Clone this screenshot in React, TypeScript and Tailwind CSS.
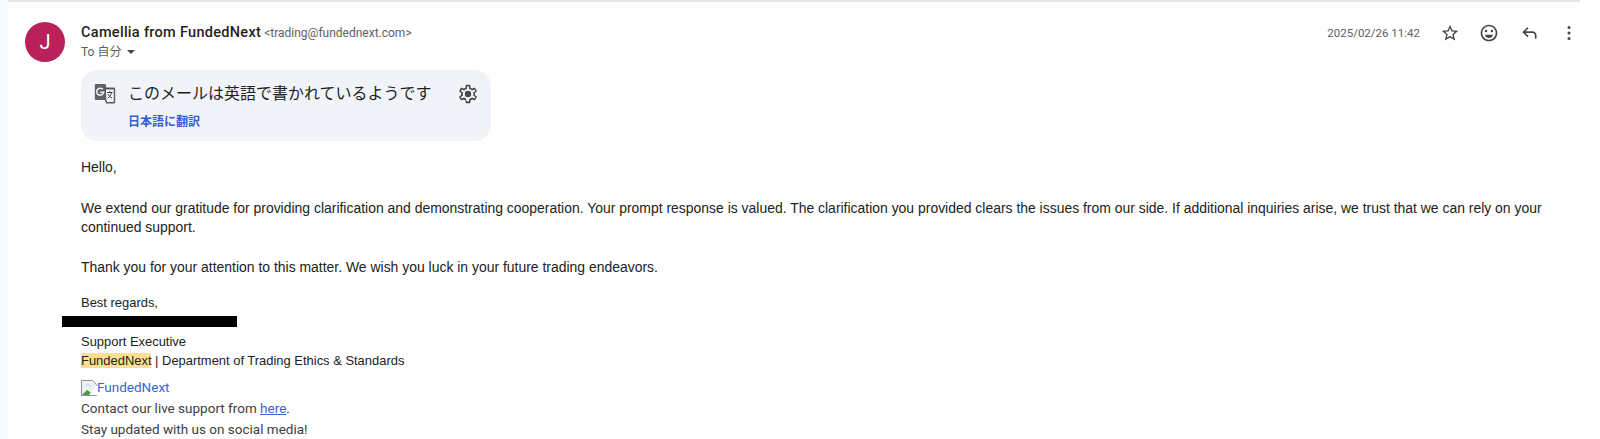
import React from 'react';

const GoogleTranslateIcon = () => (
  <svg viewBox="0 0 24 24" className="w-[24px] h-[24px]">
    <path d="M3 2h9.500l1 3.600H21a1.200 1.200 0 0 1 1.200 1.200v13.400a1.200 1.200 0 0 1-1.200 1.200h-8l-1-3.400H3a1.200 1.200 0 0 1-1.200-1.200V3.200A1.200 1.200 0 0 1 3 2z" fill="#5f6368" />
    <path d="M12.400 7h8.400a.4.4 0 0 1 .4.4v12.800a.4.4 0 0 1-.4.4h-7l-1-3.200z" fill="#f4f6f8" stroke="#3c4043" strokeWidth=".8" />
    <path d="M9.800 7.300a3.500 3.500 0 1 0 .9 2.900H7.300" fill="none" stroke="#f1f3f4" strokeWidth="1.500" />
    <path d="M14 10.500h5.600M16.800 9.200v1.300M18.600 10.500c-.5 2.500-2 4.500-4 5.700M15.200 12.200c.7 1.500 2 2.900 3.800 3.900" fill="none" stroke="#3c4043" strokeWidth="1" />
  </svg>
);

const App: React.FC = () => {
  return (
    <div className="w-[1600px] h-[439px] overflow-hidden bg-white flex font-['Roboto','Noto_Sans_CJK_JP',sans-serif]">
      {/* Left gutter */}
      <div className="w-[8px] shrink-0 bg-[#f8fafd]" />

      <div className="flex-1 min-w-0 flex flex-col">
        {/* Top rule */}
        <div className="h-[2px] w-[1572px] shrink-0 bg-[#e6e6e6]" />

        <div className="flex pt-[20px] pl-[17px]">
          <div className="w-[40px] h-[40px] shrink-0 rounded-full bg-[#b8215a] text-white flex items-center justify-center text-[20px]">
            J
          </div>

          <div className="flex-1 min-w-0 ml-[16px]">
            {/* Sender row */}
            <div className="flex items-start h-[20px]">
              <div className="flex items-baseline whitespace-nowrap pt-[1px]">
                <span className="text-[14.5px] tracking-[0.3px] leading-[20px] font-medium text-[#1f1f1f]">Camellia from FundedNext</span>
                <span className="text-[12px] leading-[20px] text-[#5e5e5e] ml-[3px]">&lt;trading@fundednext.com&gt;</span>
              </div>
              <div className="ml-auto flex items-center text-[#444746]">
                <span className="text-[11.5px] leading-[20px] pt-[1px] text-[#5e5e5e] mr-[20px]">2025/02/26 11:42</span>
                <svg viewBox="0 0 24 24" className="w-[20px] h-[20px] mr-[19px] mt-[1px]" fill="#444746">
                  <path d="M22 9.240l-7.190-.62L12 2 9.190 8.630 2 9.240l5.460 4.730L5.820 21 12 17.270 18.180 21l-1.630-7.030L22 9.240zM12 15.400l-3.760 2.270 1-4.280-3.320-2.880 4.380-.38L12 6.100l1.710 4.040 4.380.38-3.320 2.880 1 4.280L12 15.400z" />
                </svg>
                <svg viewBox="0 0 24 24" className="w-[20px] h-[20px] mr-[20px] mt-[1px]" fill="#444746">
                  <circle cx="15.500" cy="9.500" r="1.500" />
                  <circle cx="8.500" cy="9.500" r="1.500" />
                  <path d="M12 18c2.280 0 4.220-1.660 5-4H7c.78 2.340 2.720 4 5 4z" />
                  <path d="M11.990 2C6.470 2 2 6.480 2 12s4.470 10 9.990 10C17.520 22 22 17.520 22 12S17.520 2 11.990 2zM12 20c-4.420 0-8-3.580-8-8s3.580-8 8-8 8 3.580 8 8-3.580 8-8 8z" />
                </svg>
                <svg viewBox="0 0 24 24" className="w-[20px] h-[20px] mr-[20px] mt-[1px]" fill="#444746">
                  <path d="M21 19v-4a5 5 0 0 0-5-5H7.830l3.580-3.590L10 5l-6 6 6 6 1.410-1.410L7.830 12H16a3 3 0 0 1 3 3v4h2z" />
                </svg>
                <svg viewBox="0 0 24 24" className="w-[20px] h-[20px] mr-[21px] mt-[1px]" fill="#444746">
                  <circle cx="12" cy="5.500" r="1.800" />
                  <circle cx="12" cy="12" r="1.800" />
                  <circle cx="12" cy="18.500" r="1.800" />
                </svg>
              </div>
            </div>

            {/* Recipient row */}
            <div className="flex items-center h-[20px] text-[12px] text-[#5e5e5e] whitespace-nowrap">
              To 自分
              <span className="ml-[6px] w-0 h-0 border-x-[4px] border-x-transparent border-t-[4px] border-t-[#444746]" />
            </div>

            {/* Translate card */}
            <div className="mt-[8px] w-[410px] h-[71px] rounded-[16px] bg-[#f0f4f9] pl-[12px] pr-[12px] pt-[12px]">
              <div className="flex items-center h-[24px]">
                <GoogleTranslateIcon />
                <span className="ml-[11px] text-[16px] text-[#1f1f1f] whitespace-nowrap">このメールは英語で書かれているようです</span>
                <svg viewBox="0 0 24 24" className="ml-auto w-[22px] h-[22px]" fill="#444746">
                  <path d="M19.430 12.980c.04-.32.070-.64.070-.98s-.03-.66-.07-.98l2.110-1.650c.19-.15.240-.42.120-.64l-2-3.460c-.12-.22-.39-.3-.61-.22l-2.490 1c-.52-.4-1.080-.73-1.690-.98l-.38-2.650A.49.49 0 0 0 14 2h-4c-.25 0-.46.180-.49.420l-.38 2.650c-.61.250-1.170.590-1.690.980l-2.490-1c-.23-.09-.49 0-.61.220l-2 3.460c-.13.220-.07.490.12.640l2.110 1.650c-.04.320-.07.650-.07.980s.03.660.07.980l-2.110 1.650c-.19.150-.24.420-.12.640l2 3.460c.12.220.39.300.61.220l2.490-1c.52.400 1.080.730 1.690.980l.38 2.650c.03.240.24.420.49.420h4c.25 0 .46-.18.49-.42l.38-2.650c.61-.25 1.170-.59 1.690-.98l2.490 1c.23.090.49 0 .61-.22l2-3.460c.12-.22.070-.49-.12-.64l-2.110-1.650zM12 20l-.01 0-1.730-.01-.27-1.900-.14-1c-.43-.18-.83-.41-1.230-.71l-.81-.62-.94.380-1.790.72-.86-1.500 1.520-1.180.8-.63-.12-1a6 6 0 0 1 0-1.100l.12-1-.8-.63-1.520-1.180.86-1.500 1.790.72.94.380.8-.61c.41-.3.810-.54 1.230-.72l1-.4.140-1 .27-1.910h1.720l.27 1.910.14 1 .96.400c.43.180.84.410 1.250.72l.8.610.95-.38 1.790-.72.86 1.500-1.520 1.180-.8.630.13 1c.03.230.04.410.04.550s-.01.320-.04.550l-.13 1 .8.630 1.520 1.180-.86 1.500-1.790-.72-.95-.38-.8.610c-.41.300-.81.540-1.230.720l-1 .4-.14 1-.27 1.910z" />
                  <circle cx="12" cy="12" r="3.500" />
                </svg>
              </div>
              <div className="mt-[8px] ml-[35px] text-[12px] leading-[16px] font-bold text-[#2f5fd6]">日本語に翻訳</div>
            </div>

            {/* Message body */}
            <div className="mt-[17px] pr-[25px] font-['Liberation_Sans','Noto_Sans_CJK_JP',sans-serif] text-[13.95px] leading-[19.5px] text-[#222222]">
              <p>Hello,</p>
              <p className="mt-[21px]">
                We extend our gratitude for providing clarification and demonstrating cooperation. Your prompt response is valued. The clarification you provided clears the issues from our side. If additional inquiries arise, we trust that we can rely on your continued support.
              </p>
              <p className="mt-[20px]">Thank you for your attention to this matter. We wish you luck in your future trading endeavors.</p>
              <p className="mt-[16px] text-[12.95px]">Best regards,</p>
              {/* Name is blacked out in the source image */}
              <div className="-ml-[19px] mt-[3px] w-[175px] h-[11px] bg-black" />
              <p className="mt-[5px] text-[12.95px]">Support Executive</p>
              <p className="text-[12.95px]">
                <span className="bg-[#fce08f]">FundedNext</span> | Department of Trading Ethics &amp; Standards
              </p>
            </div>

            {/* Footer */}
            <div className="mt-[7px] text-[13.5px] leading-[21px] text-[#3c4043]">
              <div className="flex items-center text-[#3b63d8] h-[20px]">
                <svg viewBox="0 0 16 16" className="w-[16px] h-[16px] shrink-0">
                  <path d="M.5.5h11l4 4v11H.5z" fill="#eef0f2" stroke="#8f9499" />
                  <path d="M1 15l5-5 3 2 3 3z" fill="#4d9a3d" />
                  <path d="M4 6l3-2 3 3" fill="none" stroke="#b9d3f5" />
                  <path d="M16 5L8 15h8z" fill="#ffffff" />
                </svg>
                FundedNext
              </div>
              <p>
                Contact our live support from <a href="#" className="text-[#3b63d8] underline">here</a>.
              </p>
              <p>Stay updated with us on social media!</p>
            </div>
          </div>
        </div>
      </div>
    </div>
  );
};

export default App;
